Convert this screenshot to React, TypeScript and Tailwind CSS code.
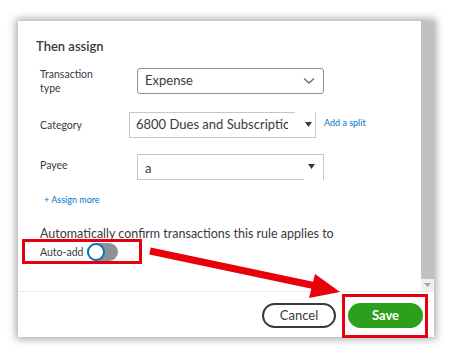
import React from "react";

function Chevron() {
  return (
    <svg width="12" height="8" viewBox="0 0 12 8" fill="none">
      <path d="M1 1.5 L6 6 L11 1.5" stroke="#6b6c72" strokeWidth="1.4" />
    </svg>
  );
}

function Tri() {
  return (
    <svg width="7" height="5" viewBox="0 0 7 5">
      <path d="M0 0 L7 0 L3.5 5 Z" fill="#393a3d" />
    </svg>
  );
}

export default function App() {
  return (
    <div
      className="relative w-[453px] h-[353px] bg-white overflow-hidden text-[#393a3d]"
      style={{ fontFamily: "Lato, 'Open Sans', sans-serif" }}
    >
      <div className="pt-[21px] pl-[18px]">
        <div className="w-[416px] h-[316px] bg-white flex flex-col shadow-[0_0_8px_2px_rgba(0,0,0,0.35)]">
          <div className="flex h-[270px]">
            <div className="flex-1 flex flex-col">
              <div className="pl-[18px] pt-[15px] text-[13px] leading-[20px] font-semibold">Then assign</div>
              {/* Row 1 */}
              <div className="flex pl-[22px] mt-[11px] items-center">
                <div className="w-[97px] text-[10.5px] leading-[14px]">
                  Transaction
                  <br />
                  type
                </div>
                <div className="w-[187px] h-[26px] border border-[#8d9096] rounded-[3px] flex items-center justify-between pl-[7px] pr-[8px] text-[13px]">
                  <span>Expense</span>
                  <Chevron />
                </div>
              </div>
              {/* Row 2 */}
              <div className="flex pl-[22px] mt-[17px] items-center">
                <div className="w-[89px] text-[10.5px] leading-[14px]">Category</div>
                <div className="relative w-[187px] h-[26px] border-l border-r border-b border-[#c4c6ca] flex items-center pl-[6px] text-[13px]">
                  <div className="absolute left-0 top-0 w-[165px] border-t border-[#c4c6ca]"></div>
                  <span className="w-[152px] shrink-0 overflow-hidden whitespace-nowrap">6800 Dues and Subscriptions</span>
                  <span className="ml-[17px] flex items-center"><Tri /></span>
                </div>
                <span className="ml-[8px] -mt-[4px] text-[9px] text-[#0077c5]">Add a split</span>
              </div>
              {/* Row 3 */}
              <div className="flex pl-[22px] mt-[16px] items-center">
                <div className="w-[97px] text-[10.5px] leading-[14px] -mt-[4px]">Payee</div>
                <div className="relative w-[187px] h-[26px] border-l border-r border-t border-[#c4c6ca] flex items-center justify-between pl-[7px] pr-[8px] text-[13px]">
                  <div className="absolute left-0 bottom-0 w-[166px] border-b border-[#c4c6ca]"></div>
                  <span className="mt-[2px]">a</span>
                  <span className="-mt-[2px] flex items-center"><Tri /></span>
                </div>
              </div>
              <div className="pl-[26px] mt-[14px] text-[9px] leading-[12px] text-[#0077c5]">+ Assign more</div>
              <div className="pl-[22px] mt-[20px] text-[12.5px] leading-[16px]">
                Automatically confirm transactions this rule applies to
              </div>
              <div className="pl-[22px] mt-[1px] flex items-center gap-[4px]">
                <span className="text-[10.5px] leading-[18px]">Auto-add</span>
                <div className="w-[31px] h-[18px] rounded-full bg-[#8d9096] flex items-center">
                  <div className="w-[18px] h-[18px] rounded-full bg-white border-2 border-[#0077c5]"></div>
                </div>
              </div>
            </div>
            {/* scrollbar */}
            <div className="w-[13px] flex flex-col bg-[#f1f1f1]">
              <div className="flex-1 bg-[#c1c1c1]"></div>
              <div className="h-[12px] flex items-center justify-center">
                <svg width="7" height="4" viewBox="0 0 7 4">
                  <path d="M0 0 L7 0 L3.5 4 Z" fill="#a3a3a3" />
                </svg>
              </div>
            </div>
          </div>
          <div className="flex-1 border-t border-[#ececec] flex items-center justify-end gap-[12px] pr-[11px] pt-[2px]">
            <button className="w-[74px] h-[25px] rounded-full border-2 border-[#393a3d] text-[13px] leading-none text-[#393a3d] bg-white">
              Cancel
            </button>
            <button className="w-[75px] h-[25px] rounded-full bg-[#2ca01c] text-[13px] leading-none font-bold text-white">
              Save
            </button>
          </div>
        </div>
      </div>

      {/* red highlight boxes */}
      <div className="absolute left-[22px] top-[239px] w-[120px] h-[25px] border-[3px] border-[#e4000f] pointer-events-none"></div>
      <div className="absolute left-[342px] top-[294px] w-[86px] h-[44px] border-[3px] border-[#e4000f] pointer-events-none"></div>

      {/* red arrow */}
      <svg className="absolute left-0 top-0 pointer-events-none" width="453" height="353" viewBox="0 0 453 353">
        <line x1="150" y1="251" x2="316" y2="286" stroke="#e8000b" strokeWidth="7" />
        <path d="M340 292 L315 274 L309 298 Z" fill="#e8000b" />
      </svg>
    </div>
  );
}
